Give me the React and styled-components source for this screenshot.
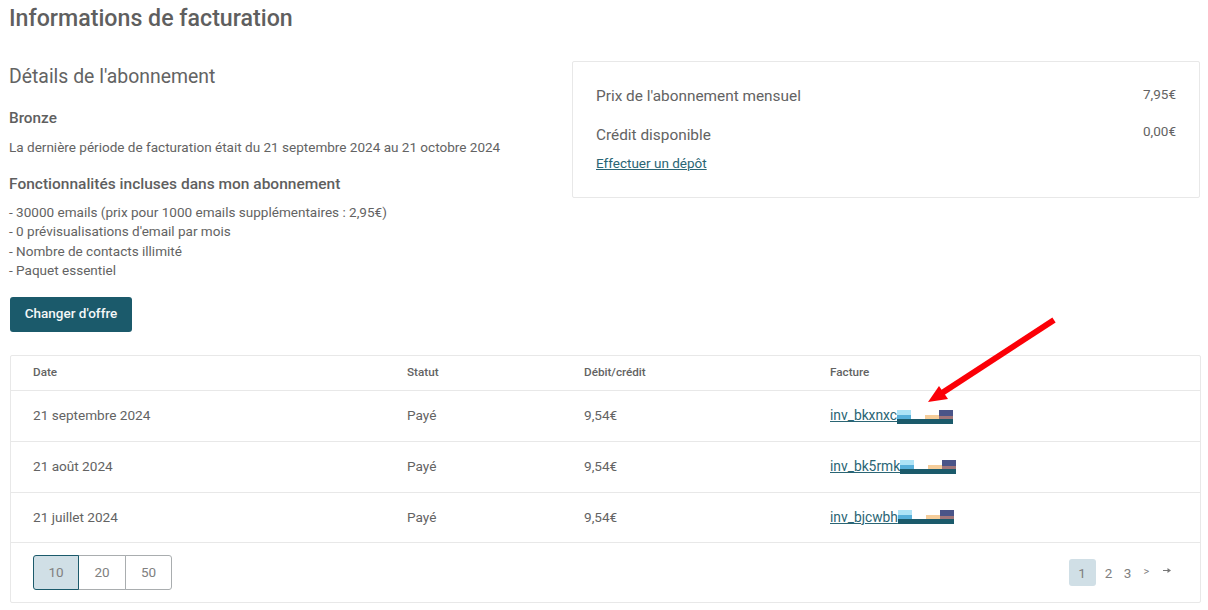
import React from 'react';
import styled, { createGlobalStyle } from 'styled-components';

const GlobalStyle = createGlobalStyle`
  html, body {
    margin: 0;
    padding: 0;
    background: #fff;
    overflow: hidden;
  }
  body {
    font-family: Roboto, "Liberation Sans", sans-serif;
    color: #636363;
  }
`;

const Page = styled.div`
  position: relative;
  width: 1208px;
  height: 610px;
  padding: 4px 8px 0 10px;
  box-sizing: border-box;
`;

const Title = styled.h1`
  margin: 0 0 0 -1px;
  font-size: 23.2px;
  line-height: 28px;
  font-weight: 500;
  color: #5f5f5f;
`;

const Top = styled.div`
  display: flex;
  justify-content: space-between;
  margin-top: 29px;
`;

const Details = styled.div`
  width: 540px;
`;

const SectionTitle = styled.h2`
  margin: 0 0 0 -1px;
  padding-top: 3px;
  font-size: 19.4px;
  line-height: 26px;
  font-weight: 400;
  color: #636363;
`;

const PlanName = styled.h3`
  margin: 18px 0 0 -1px;
  font-size: 15.3px;
  line-height: 20px;
  font-weight: 500;
  color: #5f5f5f;
`;

const Period = styled.p`
  margin: 9px 0 0 -1px;
  font-size: 13.54px;
  line-height: 20px;
`;

const FeaturesTitle = styled(PlanName)`
  margin-top: 17px;
  font-size: 15.5px;
`;

const Features = styled.ul`
  list-style: none;
  margin: 9px 0 0 -1px;
  padding: 0;
  font-size: 13.54px;
  line-height: 19.3px;
`;

const PrimaryButton = styled.button`
  display: block;
  margin-top: 17px;
  width: 122px;
  height: 35px;
  padding: 0 0 3px;
  border: none;
  border-radius: 3px;
  background: #1b5a6b;
  color: #f4f7f8;
  font-family: inherit;
  font-size: 13.5px;
  font-weight: 500;
`;

const PriceCard = styled.div`
  width: 628px;
  height: 137px;
  box-sizing: border-box;
  padding: 22px 23px 0;
  border: 1px solid #e8e8e8;
  border-radius: 2px;
`;

const PriceRow = styled.div`
  display: flex;
  justify-content: space-between;
  align-items: flex-start;
  height: 39px;
  font-size: 15.37px;
  line-height: 24px;
`;

const PriceValue = styled.span`
  margin-top: ${({ $lift }) => -$lift}px;
  font-size: 13.5px;
  line-height: 20px;
`;

const TextLink = styled.a`
  color: #2a6574;
  text-decoration: underline;
  font-size: 13.8px;
  line-height: 18px;
`;

const DepositLink = styled(TextLink)`
  display: block;
  margin-top: -8px;
  font-size: 13.5px;
`;

const Table = styled.div`
  margin-top: 23px;
  width: 1191px;
  box-sizing: border-box;
  border: 1px solid #e8e8e8;
  border-radius: 2px;
`;

const Row = styled.div`
  display: grid;
  grid-template-columns: 374px 177px 246px 1fr;
  align-items: center;
  box-sizing: border-box;
  height: ${({ $h }) => $h}px;
  padding: 0 0 2px 22px;
  border-bottom: 1px solid #e8e8e8;
  font-size: ${({ $head }) => ($head ? '11.7px' : '13.6px')};
  font-weight: ${({ $head }) => ($head ? 500 : 400)};
`;

const InvoiceCell = styled.div`
  display: flex;
  align-items: center;
`;

const Redaction = styled.svg`
  display: block;
  flex: none;
  margin-top: ${({ $drop }) => $drop}px;
`;

const Footer = styled.div`
  display: flex;
  justify-content: space-between;
  align-items: center;
  height: 59px;
  padding: 0 22px;
`;

const PageSizes = styled.div`
  display: flex;
`;

const SizeButton = styled.button`
  width: ${({ $w }) => $w}px;
  height: 35px;
  padding: 0 0 2px;
  margin-left: ${({ $pos }) => ($pos === 'first' ? 0 : -1)}px;
  border: 1px solid ${({ $active }) => ($active ? '#1b5a6b' : '#a9adaf')};
  border-radius: ${({ $pos }) =>
    $pos === 'first' ? '3px 0 0 3px' : $pos === 'last' ? '0 3px 3px 0' : '0'};
  background: ${({ $active }) => ($active ? '#d0dfe6' : '#fff')};
  color: #808080;
  font-family: inherit;
  font-size: 13.5px;
  position: ${({ $active }) => ($active ? 'relative' : 'static')};
`;

const Pager = styled.div`
  display: flex;
  align-items: center;
`;

const PageNumber = styled.span`
  display: flex;
  align-items: center;
  justify-content: center;
  width: 19px;
  height: 27px;
  color: #808080;
  font-size: 13.5px;
`;

const ActivePage = styled(PageNumber)`
  width: 27px;
  margin-right: 3.5px;
  border-radius: 3px;
  background: #d0dfe6;
`;

const NextPage = styled(PageNumber)`
  padding-bottom: 2px;
  box-sizing: border-box;
  font-size: 11px;
`;

const LastPage = styled(PageNumber)`
  width: 22px;
  padding-bottom: 5px;
  box-sizing: border-box;
`;

const Arrow = styled.svg`
  position: absolute;
  left: 0;
  top: 0;
  pointer-events: none;
`;

const rows = [
  { date: '21 septembre 2024', invoice: 'inv_bkxnxc', drop: 3 },
  { date: '21 août 2024', invoice: 'inv_bk5rmk', drop: 1 },
  { date: '21 juillet 2024', invoice: 'inv_bjcwbh', drop: 1 },
];

const RedactedStrip = ({ drop }) => (
  <Redaction $drop={drop} width="56" height="14" viewBox="0 0 56 14">
    <rect x="0" y="0" width="14" height="5" fill="#aee3f6" />
    <rect x="0" y="5" width="14" height="4" fill="#58b0da" />
    <rect x="28" y="5" width="14" height="4" fill="#f5cd9a" />
    <rect x="42" y="0" width="14" height="6" fill="#4a5488" />
    <rect x="42" y="6" width="14" height="3" fill="#a0757a" />
    <rect x="0" y="9" width="56" height="5" fill="#1b5a6b" />
  </Redaction>
);

const App = () => (
  <Page>
    <GlobalStyle />
    <Title>Informations de facturation</Title>

    <Top>
      <Details>
        <SectionTitle>Détails de l'abonnement</SectionTitle>
        <PlanName>Bronze</PlanName>
        <Period>La dernière période de facturation était du 21 septembre 2024 au 21 octobre 2024</Period>
        <FeaturesTitle>Fonctionnalités incluses dans mon abonnement</FeaturesTitle>
        <Features>
          <li>- 30000 emails (prix pour 1000 emails supplémentaires : 2,95€)</li>
          <li>- 0 prévisualisations d'email par mois</li>
          <li>- Nombre de contacts illimité</li>
          <li>- Paquet essentiel</li>
        </Features>
        <PrimaryButton>Changer d'offre</PrimaryButton>
      </Details>

      <PriceCard>
        <PriceRow>
          <span>Prix de l'abonnement mensuel</span>
          <PriceValue $lift={0}>7,95€</PriceValue>
        </PriceRow>
        <PriceRow>
          <span>Crédit disponible</span>
          <PriceValue $lift={2}>0,00€</PriceValue>
        </PriceRow>
        <DepositLink href="#">Effectuer un dépôt</DepositLink>
      </PriceCard>
    </Top>

    <Table>
      <Row $head $h={35}>
        <span>Date</span>
        <span>Statut</span>
        <span>Débit/crédit</span>
        <span>Facture</span>
      </Row>
      {rows.map((row, i) => (
        <Row key={row.invoice} $h={i === 2 ? 50 : 51}>
          <span>{row.date}</span>
          <span>Payé</span>
          <span>9,54€</span>
          <InvoiceCell>
            <TextLink href="#">{row.invoice}</TextLink>
            <RedactedStrip drop={row.drop} />
          </InvoiceCell>
        </Row>
      ))}
      <Footer>
        <PageSizes>
          <SizeButton $w={46} $active $pos="first">10</SizeButton>
          <SizeButton $w={48}>20</SizeButton>
          <SizeButton $w={47} $pos="last">50</SizeButton>
        </PageSizes>
        <Pager>
          <ActivePage>1</ActivePage>
          <PageNumber>2</PageNumber>
          <PageNumber>3</PageNumber>
          <NextPage>&gt;</NextPage>
          <LastPage>
            <svg width="8" height="7" viewBox="0 0 8 7">
              <path d="M0 3.5H6" stroke="#777" strokeWidth="1" fill="none" />
              <path d="M4.5 1L8 3.5L4.5 6Z" fill="#777" />
            </svg>
          </LastPage>
        </Pager>
      </Footer>
    </Table>

    <Arrow width="1208" height="610" viewBox="0 0 1208 610">
      <line x1="1054" y1="320" x2="942" y2="393" stroke="#fb0007" strokeWidth="6" />
      <polygon points="928,402 939,386 948,399" fill="#fb0007" />
    </Arrow>
  </Page>
);

export default App;
